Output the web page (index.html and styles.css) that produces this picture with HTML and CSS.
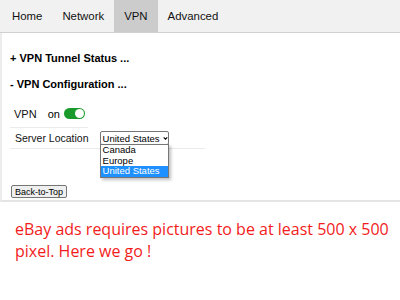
FILE: index.html
```html
<!DOCTYPE html>
<html>
<head>
<meta charset="utf-8">
<link rel="stylesheet" href="styles.css">
</head>
<body>
<nav class="tabs">
  <a class="tab">Home</a>
  <a class="tab">Network</a>
  <a class="tab active">VPN</a>
  <a class="tab">Advanced</a>
</nav>
<section class="panel">
  <h3 class="sect first">+ VPN Tunnel Status ...</h3>
  <h3 class="sect">- VPN Configuration ...</h3>
  <div class="form">
    <div class="row row-vpn">
      <span class="label">VPN</span>
      <span class="on">on</span>
      <span class="toggle"><span class="knob"></span></span>
    </div>
    <div class="row row-server">
      <span class="label">Server Location</span>
      <span class="select-wrap">
        <span class="select">United States
          <svg class="chev" width="7" height="5" viewBox="0 0 7 5"><path d="M1 1 L3.5 3.5 L6 1" fill="none" stroke="#000" stroke-width="1.5"/></svg>
        </span>
        <span class="dropdown">
          <span class="opt">Canada</span>
          <span class="opt">Europe</span>
          <span class="opt sel">United States</span>
        </span>
      </span>
    </div>
  </div>
  <button class="btn">Back-to-Top</button>
</section>
<p class="note">eBay ads requires pictures to be at least 500 x 500 pixel. Here we go !</p>
</body>
</html>
```
FILE: styles.css
```css
html, body { margin: 0; padding: 0; background: #fff; }
body { font-family: "Liberation Sans", Arial, sans-serif; color: #000; }
.tabs {
  display: flex;
  background: #f1f1f1;
  border-bottom: 1px solid #d0d0d0;
  height: 32px;
  padding-left: 2px;
}
.tab {
  font-size: 11.4px;
  padding: 0 10px;
  line-height: 32px;
  color: #111;
}
.tab.active { background: #cccccc; }
.panel {
  border-left: 2px solid #ececec;
  border-bottom: 2px solid #e4e4e4;
  padding: 0 0 4px 8px;
  height: 169px;
  box-sizing: border-box;
}
.sect {
  font-size: 11px;
  font-weight: bold;
  margin: 0;
  line-height: 14px;
  padding-top: 12px;
}
.sect.first { padding-top: 18px; }
.form { padding-top: 9px; }
.row { display: flex; align-items: center; font-size: 11px; white-space: nowrap; }
.row-vpn {
  height: 27px;
  padding-left: 4px;
  width: 74px;
  border-bottom: 1px solid #eaeaea;
}
.row-server {
  height: 20px;
  padding-left: 5px;
  width: 190px;
  border-bottom: 1px solid #eaeaea;
  font-size: 10.5px;
}
.label { color: #111; }
.on { margin-left: 11px; }
.toggle {
  margin-left: 4px;
  width: 21px;
  height: 11px;
  border-radius: 6px;
  background: #1a9a2a;
  position: relative;
  display: inline-block;
}
.knob {
  position: absolute;
  right: 1px;
  top: 1px;
  width: 9px;
  height: 9px;
  border-radius: 50%;
  background: #fff;
}
.select-wrap { position: relative; margin-left: 11px; }
.select {
  display: flex;
  align-items: center;
  box-sizing: border-box;
  width: 69px;
  height: 14px;
  border: 1px solid #767676;
  border-radius: 2px;
  font-size: 9.5px;
  padding-left: 2px;
  gap: 3px;
  white-space: nowrap;
}
.dropdown {
  position: absolute;
  left: 0;
  top: 13px;
  width: 69px;
  box-sizing: border-box;
  border: 1px solid #767676;
  background: #fff;
  display: flex;
  flex-direction: column;
  box-shadow: 2px 2px 3px rgba(0,0,0,0.25);
  z-index: 2;
}
.opt { font-size: 9.5px; line-height: 10.7px; padding-left: 2px; white-space: nowrap; }
.opt.sel { background: #1e90ff; color: #fff; }
.btn {
  font-family: "Liberation Sans", Arial, sans-serif;
  font-size: 9px;
  margin-top: 36px;
  margin-left: 1px;
  padding: 0 3px;
  height: 13px;
  line-height: 10px;
  background: #efefef;
  border: 1px solid #767676;
  border-radius: 2px;
  color: #000;
}
.note {
  margin: 16px 0 0 15px;
  width: 385px;
  font-family: "Open Sans", "Noto Sans", sans-serif;
  font-size: 16px;
  line-height: 22px;
  color: #f21c1c;
}
```
